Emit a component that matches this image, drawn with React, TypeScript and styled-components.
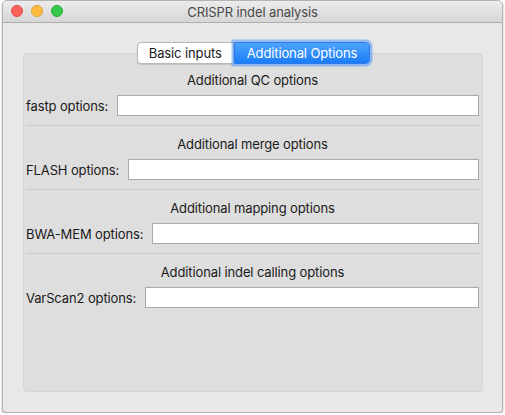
import React from "react";
import styled, { createGlobalStyle } from "styled-components";

const Global = createGlobalStyle`
  html, body { margin: 0; padding: 0; background: #ffffff; }
  body { font-family: Inter, "Helvetica Neue", "Liberation Sans", Arial, sans-serif; font-size: 13px; color: #1a1a1a; letter-spacing: -0.12px; }
  * { box-sizing: border-box; }
`;

const Window = styled.div`
  margin: 0 2px;
  width: 501px;
  height: 413px;
  border: 1px solid #b4b4b4;
  border-radius: 5px 5px 4px 4px;
  background: #e8e8e8;
  overflow: hidden;
  display: flex;
  flex-direction: column;
  box-shadow: 0 1px 2px rgba(0, 0, 0, 0.35);
`;

const TitleBar = styled.div`
  position: relative;
  height: 22px;
  flex: none;
  display: flex;
  align-items: center;
  justify-content: center;
  background: linear-gradient(#ececec, #d6d6d6);
  border-bottom: 1px solid #b0b0b0;
`;

const Lights = styled.div`
  position: absolute;
  left: 8px;
  top: 4px;
  display: flex;
  gap: 8px;
`;

const Light = styled.span<{ $c: string; $b: string }>`
  width: 12px;
  height: 12px;
  border-radius: 50%;
  background: ${(p) => p.$c};
  border: 0.5px solid ${(p) => p.$b};
`;

const Title = styled.div`
  font-size: 13px;
  color: #4a4a4a;
`;

const Content = styled.div`
  flex: 1;
  display: flex;
  flex-direction: column;
  padding: 19px 19px 20px 20px;
`;

const TabBar = styled.div`
  display: flex;
  justify-content: center;
  margin-bottom: -11px;
  position: relative;
  z-index: 1;
  padding-left: 1px;
`;

const Tab = styled.div<{ $active?: boolean; $first?: boolean }>`
  height: 22px;
  display: flex;
  align-items: center;
  padding: 0 ${(p) => (p.$active ? "12px" : "11px")};
  font-size: 13px;
  background: ${(p) => (p.$active ? "linear-gradient(#4ea4fd, #1a7cf7)" : "#ffffff")};
  color: ${(p) => (p.$active ? "#ffffff" : "#1a1a1a")};
  border: 1px solid ${(p) => (p.$active ? "#2a7be8" : "#b8b8b8")};
  border-radius: ${(p) => (p.$first ? "4px 0 0 4px" : "0 4px 4px 0")};
  box-shadow: ${(p) => (p.$active ? "0 0 0 2.5px rgba(80, 150, 245, 0.55)" : "0 0.5px 1px rgba(0,0,0,0.12)")};
`;

const Panel = styled.div`
  flex: 1;
  background: #dedede;
  border: 1px solid #d6d6d6;
  border-radius: 4px;
  padding: 18px 3px 0 2px;
  display: flex;
  flex-direction: column;
`;

const Section = styled.div`
  display: flex;
  flex-direction: column;
`;

const Header = styled.div`
  height: 16px;
  line-height: 16px;
  text-align: center;
  font-size: 13px;
  color: #1a1a1a;
`;

const Row = styled.div`
  margin-top: 7px;
  display: flex;
  align-items: center;
  gap: 9px;
`;

const Label = styled.label`
  font-size: 13px;
  color: #1a1a1a;
  white-space: nowrap;
`;

const Input = styled.input`
  flex: 1;
  height: 21px;
  border: 1px solid #aaaaaa;
  background: #ffffff;
  outline: none;
  padding: 0 3px;
  font: inherit;
`;

const Separator = styled.hr`
  margin: 9px 0 10px;
  border: none;
  border-top: 1px solid #c9c9c9;
  height: 0;
`;

const sections = [
  { title: "Additional QC options", label: "fastp options:" },
  { title: "Additional merge options", label: "FLASH options:" },
  { title: "Additional mapping options", label: "BWA-MEM options:" },
  { title: "Additional indel calling options", label: "VarScan2 options:" },
];

export default function App() {
  return (
    <>
      <Global />
      <Window>
        <TitleBar>
          <Lights>
            <Light $c="#fc605b" $b="#de4a45" />
            <Light $c="#fdbc40" $b="#dea032" />
            <Light $c="#34c84a" $b="#27aa35" />
          </Lights>
          <Title>CRISPR indel analysis</Title>
        </TitleBar>
        <Content>
          <TabBar>
            <Tab $first>Basic inputs</Tab>
            <Tab $active>Additional Options</Tab>
          </TabBar>
          <Panel>
            {sections.map((s, i) => (
              <Section key={s.title}>
                <Header>{s.title}</Header>
                <Row>
                  <Label>{s.label}</Label>
                  <Input type="text" />
                </Row>
                {i < sections.length - 1 && <Separator />}
              </Section>
            ))}
          </Panel>
        </Content>
      </Window>
    </>
  );
}
